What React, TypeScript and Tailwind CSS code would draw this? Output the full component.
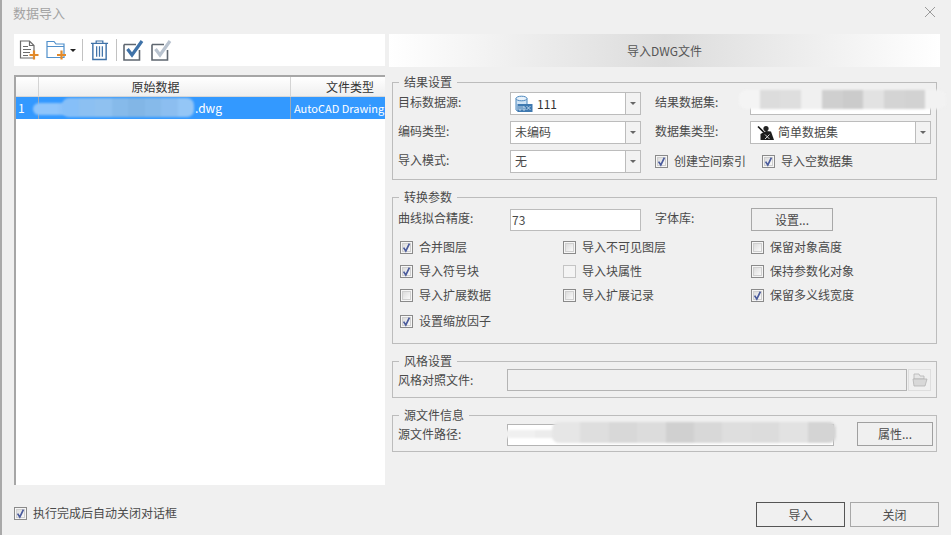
import React from "react";

function Check({ checked = false, disabled = false }: { checked?: boolean; disabled?: boolean }) {
  return (
    <span className={`relative flex h-[13px] w-[13px] shrink-0 items-center justify-center border ${disabled ? "border-[#c4c4c4] bg-[#f4f4f4]" : "border-[#8a8a8a] bg-[#f6f6f6]"}`}>
      {!disabled && <span className="h-[9px] w-[9px] border border-[#cfcfcf] bg-gradient-to-br from-[#dcdcdc] to-[#fafafa]" />}
      {checked && (
        <svg viewBox="0 0 13 13" className="absolute left-[-1px] top-[-1px] h-[13px] w-[13px]">
          <path d="M3.6 6.6 L5.8 10 L9.4 2.6" fill="none" stroke="#4a5b9c" strokeWidth="1.7" />
        </svg>
      )}
    </span>
  );
}

function CheckLabel({ label, checked, disabled, className = "" }: { label: string; checked?: boolean; disabled?: boolean; className?: string }) {
  return (
    <div className={`flex items-center gap-[6px] ${className}`}>
      <Check checked={checked} disabled={disabled} />
      <span className="whitespace-nowrap pb-[2px]">{label}</span>
    </div>
  );
}

function Group({ title, className, children }: { title: string; className: string; children: React.ReactNode }) {
  return (
    <section className={`relative mx-[3px] w-[545px] border border-[#bcbcbc] pl-[5px] ${className}`}>
      <span className="absolute left-[6px] top-[-10px] bg-[#f0f0f0] px-[5px] leading-[17px]">{title}</span>
      {children}
    </section>
  );
}

function Combo({ width, children }: { width: string; children: React.ReactNode }) {
  return (
    <div className={`flex h-[23px] shrink-0 items-center border border-[#bcbcbc] bg-white ${width}`}>
      <div className="flex min-w-0 flex-1 items-center gap-[4px] pl-[4px]">{children}</div>
      <div className="flex h-full w-[15px] items-center justify-center border-l border-[#bcbcbc] bg-[#f2f2f2]">
        <span className="h-0 w-0 border-x-[3px] border-t-[3px] border-x-transparent border-t-[#666]" />
      </div>
    </div>
  );
}

function Smudge({ className, colors }: { className: string; colors: string[] }) {
  return (
    <div className={`pointer-events-none absolute flex overflow-hidden rounded-[7px] blur-[1px] ${className}`}>
      {colors.map((c, i) => (
        <div key={i} className="h-full flex-1" style={{ background: c }} />
      ))}
    </div>
  );
}

function DocPlus() {
  return (
    <svg viewBox="0 0 20 20" className="h-[20px] w-[20px]">
      <path d="M1.5 1 H10.5 L15 5.5 V18 H1.5 Z M10.5 1 V5.5 H15" fill="#fff" stroke="#6b6b6b" strokeWidth="1.2" />
      <path d="M4 6.5 H9 M4 9.5 H12 M4 12.5 H11 M4 15.5 H9" stroke="#6b6b6b" strokeWidth="1.2" />
      <path d="M15 10.5 V19.5 M10.5 15 H19.5" stroke="#e28a2b" strokeWidth="2.2" />
    </svg>
  );
}

function FolderPlus() {
  return (
    <svg viewBox="0 0 22 20" className="h-[20px] w-[22px]">
      <path d="M1 1.5 H8 L10 4 H18 V17.5 H1 Z M1 6.5 H18" fill="#fff" stroke="#4f8fcb" strokeWidth="1.2" />
      <path d="M15.5 10.5 V19.5 M11 15 H20" stroke="#e28a2b" strokeWidth="2.2" />
    </svg>
  );
}

function Trash() {
  return (
    <svg viewBox="0 0 20 22" className="h-[21px] w-[19px]">
      <path d="M1 3.5 H19 M6.5 3.5 V1 H13.5 V3.5" fill="none" stroke="#3f72a8" strokeWidth="1.3" />
      <path d="M3 3.5 V20.5 H17 V3.5" fill="none" stroke="#3f72a8" strokeWidth="1.5" />
      <path d="M7 6.5 V17.5 M10 6.5 V17.5 M13 6.5 V17.5" stroke="#3f72a8" strokeWidth="1.3" />
    </svg>
  );
}

function BigCheck({ color }: { color: string }) {
  return (
    <svg viewBox="0 0 21 21" className="h-[21px] w-[21px]">
      <path d="M1 4.5 H13 M1 4.5 V20 H16.5 V10" fill="none" stroke="#5f6770" strokeWidth="1.6" />
      <path d="M4.5 9 L9 15 L19 1" fill="none" stroke={color} strokeWidth="3.2" />
    </svg>
  );
}

function DbIcon() {
  return (
    <svg viewBox="0 0 18 18" className="h-[18px] w-[18px] shrink-0">
      <path d="M1 3.5 V15 C1 16.5 12 16.5 12 15 V3.5" fill="#cfe3f5" stroke="#4a86bd" />
      <ellipse cx="6.5" cy="3.5" rx="5.5" ry="2.3" fill="#e8f2fb" stroke="#4a86bd" />
      <rect x="2.5" y="9" width="15" height="8" fill="#3f79b0" />
      <path d="M4 11 V15 H6 V11 M8 11 V15 H10 V12 H8 M11.5 11 L15.5 15 M15.5 11 L11.5 15" stroke="#dcebf8" strokeWidth="0.8" fill="none" />
    </svg>
  );
}

function DatasetIcon() {
  return (
    <svg viewBox="0 0 18 16" className="h-[16px] w-[18px] shrink-0">
      <path d="M1 1.5 L7 7.5" stroke="#111" strokeWidth="1.6" />
      <circle cx="9" cy="3.5" r="2.6" fill="#222" />
      <path d="M3.5 9 L9 6 L14 6.5 L17 15 H3.5 Z" fill="#1c1c1c" />
      <path d="M8 9.5 L12.5 14 M12.5 9.5 L8 14" stroke="#d8d8d8" strokeWidth="1" />
    </svg>
  );
}

function GrayFolder() {
  return (
    <svg viewBox="0 0 16 14" className="h-[14px] w-[16px]">
      <path d="M2 1 H7 L8 3 H12 V6 H2 Z" fill="#e6e6e6" stroke="#b4b4b4" strokeWidth="0.8" />
      <path d="M1 6 H15 L13 13 H2 Z" fill="#d8d8d8" stroke="#b4b4b4" strokeWidth="0.8" />
    </svg>
  );
}

export default function App() {
  return (
    <div
      className="relative flex h-[535px] w-[951px] flex-col overflow-hidden border-l-2 border-[#a9a9a9] bg-[#f0f0f0] text-[12px] leading-[17px] text-[#4a4a4a]"
      style={{ fontFamily: '"Noto Sans CJK SC", "Noto Sans", sans-serif' }}
    >
      {/* Title bar */}
      <header className="flex h-[34px] shrink-0 items-start justify-between pl-[11px] pr-[15px] pt-[4px]">
        <span className="text-[13px] leading-[18px] text-[#a3a3a3]">数据导入</span>
        <svg viewBox="0 0 12 12" className="mt-[2px] h-[12px] w-[12px]">
          <path d="M1 1 L11 11 M11 1 L1 11" stroke="#9a9a9a" strokeWidth="1" />
        </svg>
      </header>

      <main className="flex min-h-0 flex-1 pl-[12px]">
        {/* Left pane */}
        <div className="flex w-[371px] shrink-0 flex-col">
          <div className="flex h-[32px] shrink-0 items-center bg-white pl-[5px]">
            <DocPlus />
            <span className="ml-[7px]"><FolderPlus /></span>
            <span className="ml-[2px] h-0 w-0 border-x-[3px] border-t-[3px] border-x-transparent border-t-[#222]" />
            <span className="ml-[6px] h-[22px] w-px bg-[#c2c2c2]" />
            <span className="ml-[7px]"><Trash /></span>
            <span className="ml-[7px] h-[22px] w-px bg-[#c2c2c2]" />
            <span className="ml-[6px]"><BigCheck color="#3f72a8" /></span>
            <span className="ml-[7px]"><BigCheck color="#b9c3cf" /></span>
          </div>

          <div className="mt-[9px] h-[410px] overflow-hidden border-l-2 border-t-2 border-[#a6a6a6] bg-white">
            <div className="flex h-[20px] border-b border-[#d8d8d8] bg-gradient-to-b from-white to-[#efefef] text-[#333]">
              <div className="w-[23px] border-r border-[#d4d4d4]" />
              <div className="w-[252px] border-r border-[#d4d4d4] pr-[18px] text-center leading-[19px]">原始数据</div>
              <div className="flex-1 whitespace-nowrap pl-[35px] leading-[19px]">文件类型</div>
            </div>
            <div className="flex h-[22px] bg-[#3399ff] text-white">
              <div className="w-[23px] border-r border-[#9aa8b8] pl-[2px] leading-[22px]">1</div>
              <div className="w-[252px] border-r border-[#9aa8b8] pl-[156px] leading-[22px]">.dwg</div>
              <div className="flex-1 overflow-hidden whitespace-nowrap pl-[3px] text-[11px] leading-[22px]">AutoCAD Drawing</div>
            </div>
          </div>

          <CheckLabel label="执行完成后自动关闭对话框" checked className="mt-[19px]" />
        </div>

        {/* Right pane */}
        <div className="ml-[4px] flex w-[551px] shrink-0 flex-col">
          <div className="flex h-[33px] shrink-0 items-center justify-center bg-gradient-to-r from-white via-[#dcdcdc] to-white text-[#555]">
            导入DWG文件
          </div>

          <Group title="结果设置" className="mt-[15px] h-[98px] pt-[9px]">
            <div className="flex flex-col gap-[6px]">
              <div className="flex items-center">
                <span className="mb-[4px] w-[112px] shrink-0">目标数据源:</span>
                <Combo width="w-[131px]"><DbIcon /><span className="text-[#333]">111</span></Combo>
                <span className="mb-[4px] ml-[14px] w-[95px] shrink-0">结果数据集:</span>
                <div className="h-[23px] w-[181px] border border-[#bcbcbc] bg-white" />
              </div>
              <div className="flex items-center">
                <span className="mb-[4px] w-[112px] shrink-0">编码类型:</span>
                <Combo width="w-[131px]"><span className="pb-[2px]">未编码</span></Combo>
                <span className="mb-[4px] ml-[14px] w-[95px] shrink-0">数据集类型:</span>
                <Combo width="w-[181px]"><span className="ml-[2px]"><DatasetIcon /></span><span className="ml-[-1px] pb-[2px]">简单数据集</span></Combo>
              </div>
              <div className="flex items-center">
                <span className="mb-[4px] w-[112px] shrink-0">导入模式:</span>
                <Combo width="w-[131px]"><span className="pb-[2px]">无</span></Combo>
                <CheckLabel label="创建空间索引" checked className="ml-[14px] w-[107px]" />
                <CheckLabel label="导入空数据集" checked />
              </div>
            </div>
          </Group>

          <Group title="转换参数" className="mt-[17px] h-[147px] pt-[10px]">
            <div className="flex items-center">
              <span className="mb-[4px] w-[112px] shrink-0">曲线拟合精度:</span>
              <div className="h-[22px] w-[131px] border border-[#bcbcbc] bg-white pl-[1px] leading-[19px]">73</div>
              <span className="mb-[4px] ml-[14px] w-[96px] shrink-0">字体库:</span>
              <button className="h-[23px] w-[82px] border border-[#a8a8a8] bg-[#f0f0f0] leading-[19px]">设置...</button>
            </div>
            <div className="mt-[4px] grid grid-cols-[163px_188px_1fr] grid-rows-[24px_24px_24px_28px] items-center pl-[2px]">
              <CheckLabel label="合并图层" checked />
              <CheckLabel label="导入不可见图层" />
              <CheckLabel label="保留对象高度" />
              <CheckLabel label="导入符号块" checked />
              <CheckLabel label="导入块属性" disabled />
              <CheckLabel label="保持参数化对象" />
              <CheckLabel label="导入扩展数据" />
              <CheckLabel label="导入扩展记录" />
              <CheckLabel label="保留多义线宽度" checked />
              <CheckLabel label="设置缩放因子" checked />
            </div>
          </Group>

          <Group title="风格设置" className="mt-[17px] h-[37px] pt-[7px]">
            <div className="flex items-center">
              <span className="mb-[2px] w-[109px] shrink-0">风格对照文件:</span>
              <div className="h-[22px] w-[400px] border border-[#b4b4b4] bg-[#f0f0f0]" />
              <div className="ml-[1px] flex h-[22px] w-[23px] items-center justify-center border border-[#dedede]"><GrayFolder /></div>
            </div>
          </Group>

          <Group title="源文件信息" className="mt-[17px] h-[37px] pt-[5px]">
            <div className="flex items-center">
              <span className="w-[109px] shrink-0">源文件路径:</span>
              <div className="mt-[3px] h-[22px] w-[327px] border border-[#b4b4b4] bg-white" />
              <button className="ml-[23px] h-[24px] w-[76px] border border-[#a0a0a0] bg-[#f0f0f0] leading-[20px]">属性...</button>
            </div>
          </Group>

          <div className="mt-[50px] flex">
            <button className="ml-[367px] h-[25px] w-[89px] border border-[#555] bg-[#f0f0f0] leading-[22px]">导入</button>
            <button className="ml-[5px] h-[25px] w-[89px] border border-[#a8a8a8] bg-[#f0f0f0] leading-[22px]">关闭</button>
          </div>
        </div>
      </main>

      {/* Masked regions (over the content) */}
      <Smudge className="left-[31px] top-[103px] h-[12px] w-[50px]" colors={["#8fc5fb", "#8cc2f9"]} />
      <Smudge className="left-[60px] top-[98px] h-[19px] w-[132px]" colors={["#86bff8", "#8cc0f2", "#8fc1f0", "#86baea", "#82b6e6", "#86baea", "#8cbef0", "#94c6f6"]} />
      <Smudge className="left-[737px] top-[90px] h-[19px] w-[207px]" colors={["#f4f4f4", "#dcdcdc", "#dedede", "#f0f0f0", "#cfcfcf", "#cbcbcb", "#e2e2e2", "#d4d4d4", "#d2d2d2", "#f2f2f2"]} />
      <Smudge className="left-[503px] top-[430px] h-[8px] w-[60px]" colors={["#f0f0f0", "#ececec"]} />
      <Smudge className="left-[550px] top-[422px] h-[21px] w-[284px]" colors={["#e6e6e6", "#dedede", "#d8d8d8", "#dcdcdc", "#d0d0d0", "#d8d8d8", "#dedede", "#dcdcdc", "#e2e2e2", "#d4d4d4"]} />
    </div>
  );
}
